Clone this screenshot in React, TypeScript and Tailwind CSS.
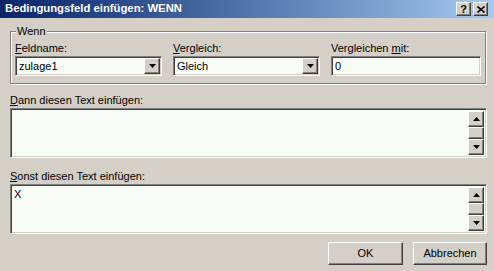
import React from "react";

const raised =
  "border border-t-white border-l-white border-r-[#404040] border-b-[#404040] shadow-[inset_-1px_-1px_0_#808080] bg-[#d4d0c8]";
const sunken =
  "border border-t-[#808080] border-l-[#808080] border-r-white border-b-white shadow-[inset_1px_1px_0_#404040,inset_-1px_-1px_0_#d4d0c8] bg-[#f8fcf7]";

function Arrow({ up }: { up?: boolean }) {
  return (
    <svg width="7" height="4" viewBox="0 0 7 4">
      <path d={up ? "M3.5 0L7 4H0Z" : "M0 0H7L3.5 4Z"} fill="#000" />
    </svg>
  );
}

function Combo({ value, width }: { value: string; width: string }) {
  return (
    <div className={`${sunken} ${width} h-[20px] flex items-stretch`}>
      <div className="flex-1 pl-[3px] flex items-center leading-none">{value}</div>
      <div className={`${raised} w-[16px] m-[1px] flex items-center justify-center`}>
        <Arrow />
      </div>
    </div>
  );
}

function TextBox({ value }: { value?: string }) {
  return (
    <div className={`${sunken} h-[50px] flex`}>
      <div className="flex-1 pl-[3px] pt-[3px] leading-[13px]">{value}</div>
      <div className="w-[16px] my-[2px] mr-[2px] flex flex-col">
        <div className={`${raised} h-[16px] flex items-center justify-center`}>
          <Arrow up />
        </div>
        <div className={`${raised} flex-1`} />
        <div className={`${raised} h-[16px] flex items-center justify-center`}>
          <Arrow />
        </div>
      </div>
    </div>
  );
}

export default function App() {
  return (
    <div className="w-[494px] h-[271px] bg-[#d4d0c8] overflow-hidden text-[11px] text-black font-['Liberation_Sans',Arial,sans-serif]">
      {/* Title bar */}
      <div className="h-[18px] flex items-center justify-between pl-[5px] pr-[6px] bg-gradient-to-r from-[#0a246a] to-[#a6caf0]">
        <span className="text-white font-bold text-[11.3px] leading-none">Bedingungsfeld einfügen: WENN</span>
        <div className="flex gap-[2px]">
          <div className={`${raised} w-[15px] h-[14px] flex items-center justify-center font-bold text-[11px] leading-none`}>?</div>
          <div className={`${raised} w-[15px] h-[14px] flex items-center justify-center`}>
            <svg width="8" height="7" viewBox="0 0 8 7">
              <path d="M0.5 0.5L7.5 6.5M7.5 0.5L0.5 6.5" stroke="#000" strokeWidth="1.6" />
            </svg>
          </div>
        </div>
      </div>

      <div className="pl-[10px] pr-[7px]">
        {/* Wenn group */}
        <div className="relative mt-[13px] mr-[1px] border border-[#808080] shadow-[inset_1px_1px_0_#fff,1px_1px_0_#fff] pt-[10px] pb-[7px] pl-[4px] pr-[6px]">
          <span className="absolute -top-[7px] left-[5px] bg-[#d4d0c8] px-[1px] leading-[13px]">Wenn</span>
          <div className="flex gap-[11px]">
            <div className="flex flex-col">
              <div className="leading-[13px] mb-[1px]">
                <span className="underline">F</span>eldname:
              </div>
              <Combo value="zulage1" width="w-[147px]" />
            </div>
            <div className="flex flex-col">
              <div className="leading-[13px] mb-[1px]">
                <span className="underline">V</span>ergleich:
              </div>
              <Combo value="Gleich" width="w-[147px]" />
            </div>
            <div className="flex flex-col">
              <div className="leading-[13px] mb-[1px]">
                Vergleichen <span className="underline">m</span>it:
              </div>
              <div className={`${sunken} w-[150px] h-[20px] pl-[3px] flex items-center leading-none`}>0</div>
            </div>
          </div>
        </div>

        <div className="mt-[10px] leading-[13px] mb-[1px]">
          <span className="underline">D</span>ann diesen Text einfügen:
        </div>
        <TextBox />

        <div className="mt-[12px] leading-[13px] mb-[1px]">
          <span className="underline">S</span>onst diesen Text einfügen:
        </div>
        <TextBox value="X" />

        <div className="mt-[8px] flex justify-end gap-[10px]">
          <button className={`${raised} w-[75px] h-[23px] leading-none`}>OK</button>
          <button className={`${raised} w-[74px] h-[23px] leading-none`}>Abbrechen</button>
        </div>
      </div>
    </div>
  );
}
